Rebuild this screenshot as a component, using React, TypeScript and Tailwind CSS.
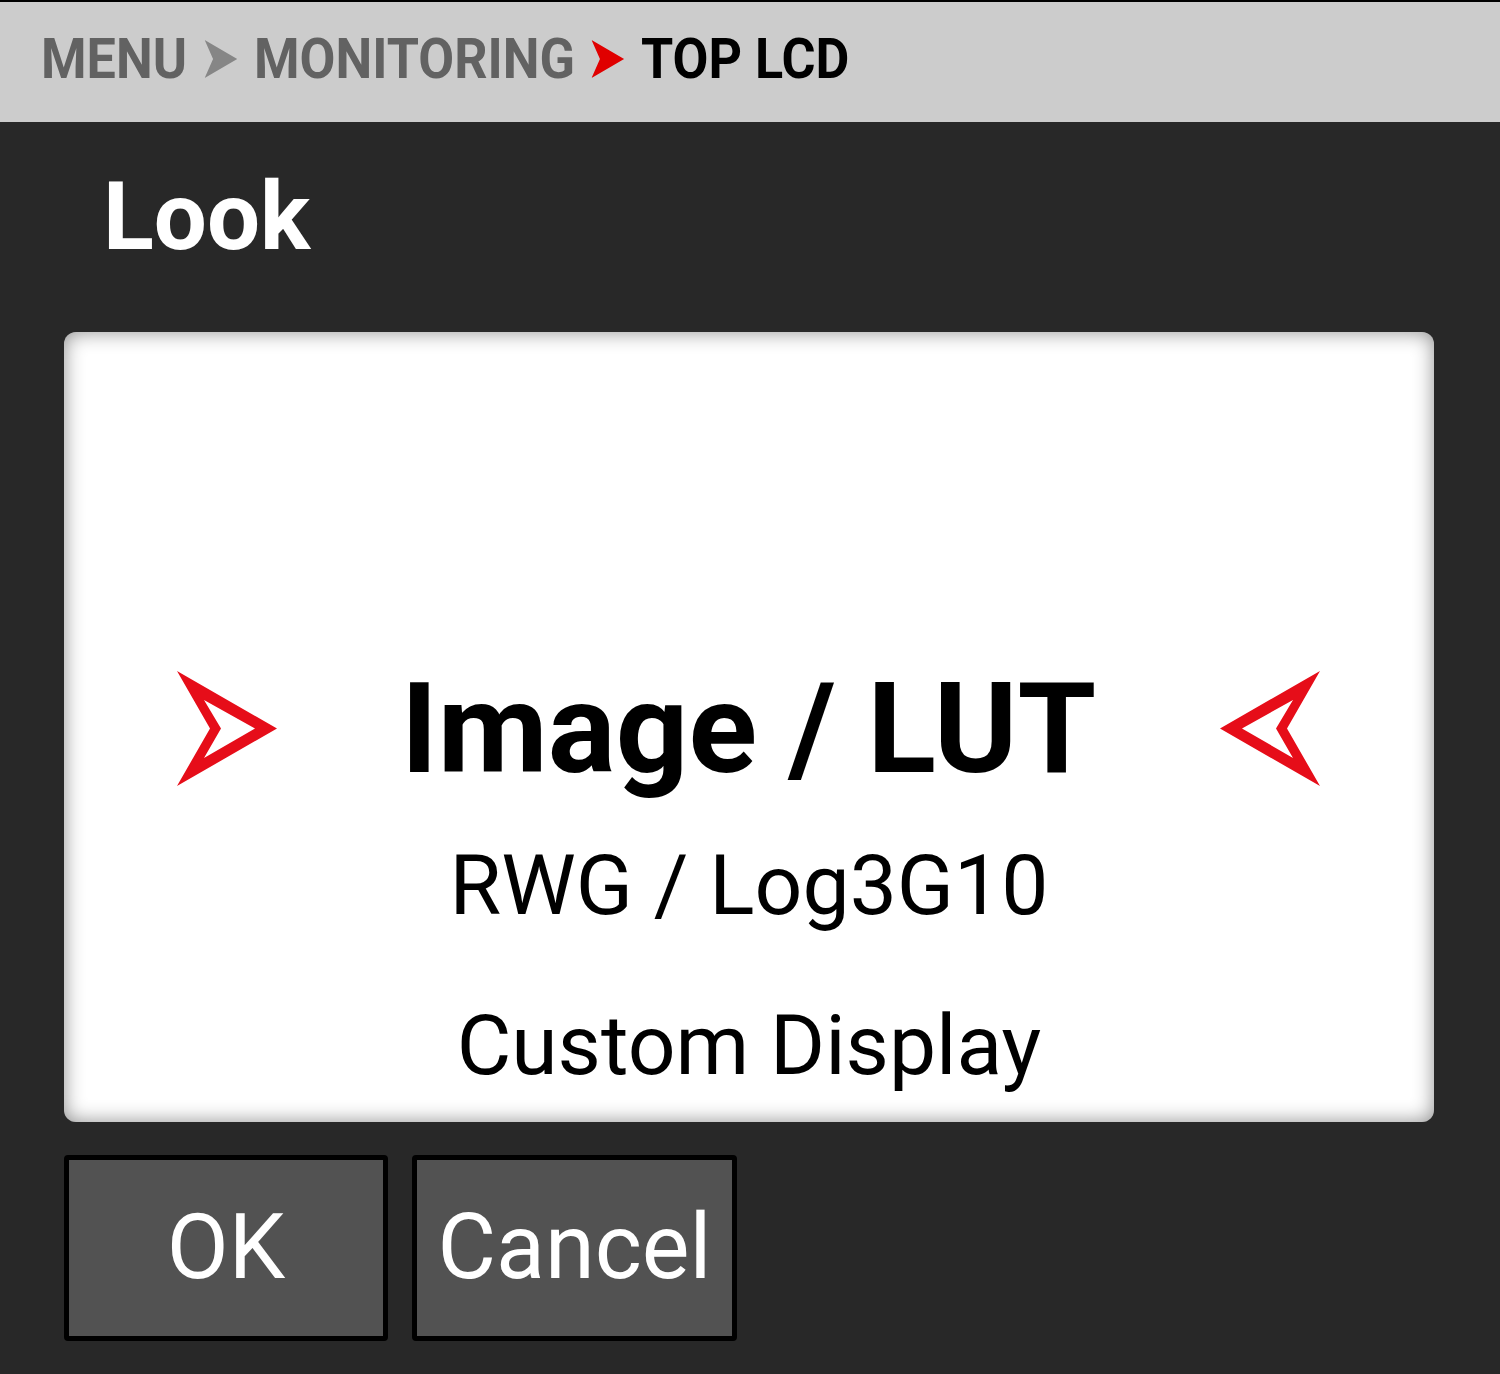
import React from 'react'

function Chevron({ color }: { color: string }) {
  return (
    <svg width="35" height="38" viewBox="0 0 35 38" className="shrink-0">
      <polygon points="0,0 35,19 0,38 9,19" fill={color} />
    </svg>
  )
}

function OutlineArrow({ flip }: { flip?: boolean }) {
  return (
    <svg
      width="100"
      height="116"
      viewBox="0 0 100 116"
      className={flip ? 'shrink-0 -scale-x-100' : 'shrink-0'}
    >
      <path
        d="M0 0 L100 57.5 L0 115 L33 57.5 Z M27 29 L78 57.5 L27 87 L44 57.5 Z"
        fill="#e60d19"
        fillRule="evenodd"
      />
    </svg>
  )
}

export default function App() {
  return (
    <div className="flex h-[1374px] w-[1500px] flex-col bg-[#282828] font-['Roboto',sans-serif]">
      {/* breadcrumb */}
      <div className="h-[2px] bg-black" />
      <div className="flex h-[120px] items-center bg-[#cccccc] pl-[41px] pb-[6px]">
        <div className="flex origin-left scale-x-[0.93] items-center text-[56px] font-bold leading-none">
          <span className="text-[#626262]">MENU</span>
          <span className="ml-[19px] mr-[18px] flex">
            <Chevron color="#868686" />
          </span>
          <span className="text-[#626262]">MONITORING</span>
          <span className="ml-[18px] mr-[18px] flex">
            <Chevron color="#e00000" />
          </span>
          <span className="text-black">TOP LCD</span>
        </div>
      </div>

      {/* title */}
      <div className="h-[210px] pl-[103px] pt-[48px] text-[94px] font-bold leading-none text-white">Look</div>

      {/* value panel */}
      <div className="ml-[64px] mr-[66px] flex h-[790px] flex-col items-center justify-end rounded-[12px] bg-white pb-[34px] shadow-[inset_0_0_20px_rgba(0,0,0,0.45)]">
        <div className="flex w-full items-center justify-between pl-[113px] pr-[114px]">
          <OutlineArrow />
          <span className="text-[127px] font-bold leading-none text-black">Image / LUT</span>
          <OutlineArrow flip />
        </div>
        <div className="mt-[52px] text-[84px] leading-none text-black">RWG / Log3G10</div>
        <div className="mt-[76px] text-[84px] leading-none text-black">Custom Display</div>
      </div>

      {/* actions */}
      <div className="mt-[33px] flex gap-[24px] pl-[64px]">
        <button className="flex h-[186px] w-[324px] items-center justify-center rounded-[4px] border-[5px] border-black bg-[#525252] text-[90px] leading-none text-white">
          OK
        </button>
        <button className="flex h-[186px] w-[325px] items-center justify-center rounded-[4px] border-[5px] border-black bg-[#525252] text-[90px] leading-none text-white">
          Cancel
        </button>
      </div>
    </div>
  )
}
